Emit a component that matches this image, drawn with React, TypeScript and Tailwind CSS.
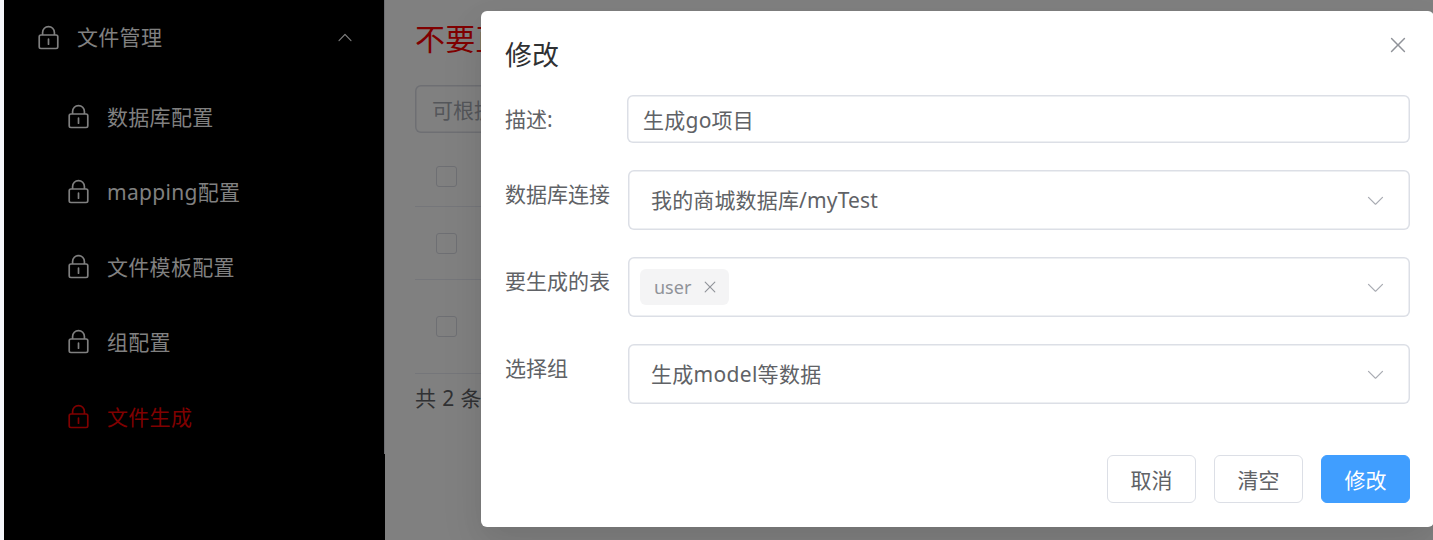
import type { ReactNode } from 'react';

const PATHS = {
  lock: 'M224 448a32 32 0 0 0-32 32v384a32 32 0 0 0 32 32h576a32 32 0 0 0 32-32V480a32 32 0 0 0-32-32H224zm0-64h576a96 96 0 0 1 96 96v384a96 96 0 0 1-96 96H224a96 96 0 0 1-96-96V480a96 96 0 0 1 96-96z M512 544a32 32 0 0 1 32 32v192a32 32 0 1 1-64 0V576a32 32 0 0 1 32-32zm192-160v-64a192 192 0 1 0-384 0v64h384zM512 64a256 256 0 0 1 256 256v128H256V320A256 256 0 0 1 512 64z',
  up: 'm488.832 344.32-339.84 356.672a32 32 0 0 0 0 44.16l.384.384a29.44 29.44 0 0 0 42.688 0l320-335.872 319.872 335.872a29.44 29.44 0 0 0 42.688 0l.384-.384a32 32 0 0 0 0-44.16L535.168 344.32a32 32 0 0 0-46.336 0z',
  down: 'M831.872 340.864 512 652.672 192.128 340.864a30.592 30.592 0 0 0-42.752 0 29.12 29.12 0 0 0 0 41.6L489.664 714.24a32 32 0 0 0 44.672 0l340.288-331.712a29.12 29.12 0 0 0 0-41.728 30.592 30.592 0 0 0-42.752 0z',
  close: 'M764.288 214.592 512 466.88 259.712 214.592a31.936 31.936 0 0 0-45.12 45.12L466.752 512 214.528 764.224a31.936 31.936 0 1 0 45.12 45.184L512 557.184l252.288 252.288a31.936 31.936 0 0 0 45.12-45.12L557.12 512.064l252.288-252.352a31.936 31.936 0 1 0-45.12-45.184z',
};

function Icon({ name, className }: { name: keyof typeof PATHS; className: string }) {
  return (
    <svg viewBox="0 0 1024 1024" fill="currentColor" className={`shrink-0 ${className}`}>
      <path d={PATHS[name]} />
    </svg>
  );
}

const menu = ['数据库配置', 'mapping配置', '文件模板配置', '组配置', '文件生成'];

function Sidebar() {
  return (
    <aside className="relative flex w-[381px] shrink-0 flex-col bg-black text-[#808080]">
      <div className="flex h-[74px] items-center pr-[31px] pl-[31px]">
        <Icon name="lock" className="size-[27px]" />
        <span className="ml-[15px] flex-1 tracking-[0.3px]">文件管理</span>
        <Icon name="up" className="size-[18px]" />
      </div>
      <ul className="mt-[5px]">
        {menu.map((label) => (
          <li
            key={label}
            className={`flex h-[75px] items-center pl-[61px] ${label === '文件生成' ? 'text-[#800000]' : ''}`}
          >
            <Icon name="lock" className="size-[27px]" />
            <span className="ml-[15px] tracking-[0.3px]">{label}</span>
          </li>
        ))}
      </ul>
      <span className="absolute top-0 right-0 h-[454px] w-px bg-[#6e6f73]" />
    </aside>
  );
}

function CheckRow({ className }: { className: string }) {
  return (
    <div className={`flex items-center border-b border-[#75767a] pl-[21px] ${className}`}>
      <span className="size-[21px] rounded-[3px] border border-[#6e6f73]" />
    </div>
  );
}

function Field({ label, className, children }: { label: string; className: string; children: ReactNode }) {
  return (
    <div className={`flex ${className}`}>
      <label className="h-12 w-[122px] shrink-0 leading-[48px] whitespace-nowrap">{label}</label>
      {children}
    </div>
  );
}

function Select({ children, className }: { children: ReactNode; className: string }) {
  return (
    <div
      className={`ml-px flex h-[60px] flex-1 items-center justify-between rounded-[6px] pr-6 shadow-[inset_0_0_0_1.5px_#dcdfe6] ${className}`}
    >
      {children}
      <Icon name="down" className="size-[21px] text-[#a8abb2]" />
    </div>
  );
}

function Button({ children, className }: { children: ReactNode; className: string }) {
  return (
    <button className={`h-12 w-[89px] rounded-[6px] border pt-0.5 text-center ${className}`}>{children}</button>
  );
}

function Dialog() {
  return (
    <div className="absolute top-[11px] left-[481px] flex h-[516px] w-[953px] flex-col rounded-[6px] bg-white pr-[24px] pl-[24px] text-[#606266] shadow-[0_18px_48px_6px_rgba(0,0,0,0.04),0_12px_30px_rgba(0,0,0,0.08)]">
      <header className="flex h-[84px] items-start justify-between">
        <h2 className="pt-[26px] text-[27px] leading-[36px] text-[#303133]">修改</h2>
        <Icon name="close" className="mt-[22px] size-6 text-[#909399]" />
      </header>
      <Field label="描述:" className="h-[75px]">
        <div className="flex h-12 flex-1 items-center rounded-[6px] pt-0.5 pl-4 tracking-[0.25px] shadow-[inset_0_0_0_1.5px_#dcdfe6]">
          生成go项目
        </div>
      </Field>
      <Field label="数据库连接" className="h-[87px]">
        <Select className="pl-[23px]">
          <span className="tracking-[0.15px]">我的商城数据库/myTest</span>
        </Select>
      </Field>
      <Field label="要生成的表" className="h-[87px]">
        <Select className="pl-3">
          <span className="flex h-9 w-[89px] items-center rounded-[6px] bg-[#f4f4f5] pl-[14px] text-[18px] text-[#909399]">
            user
            <Icon name="close" className="ml-[10px] size-[18px]" />
          </span>
        </Select>
      </Field>
      <Field label="选择组" className="h-[111px]">
        <Select className="pl-[23px]">
          <span className="tracking-[0.3px]">生成model等数据</span>
        </Select>
      </Field>
      <footer className="flex justify-end gap-[18px]">
        <Button className="border-[#dcdfe6]">取消</Button>
        <Button className="border-[#dcdfe6]">清空</Button>
        <Button className="border-[#409eff] bg-[#409eff] text-white">修改</Button>
      </footer>
    </div>
  );
}

export default function App() {
  return (
    <div className="relative flex h-[540px] w-[1433px] overflow-hidden bg-[#f5f6fb] pl-1 font-['Noto_Sans','Noto_Sans_CJK_SC',sans-serif] text-[21px] leading-[30px] font-normal">
      <Sidebar />
      <main className="flex-1 bg-[#808080] pl-[30px] whitespace-nowrap">
        <h1 className="pt-[18px] text-[30px] leading-[42px] tracking-[0.3px] text-[#800000]">不要直</h1>
        <div className="mt-[25px] flex h-12 w-[300px] items-center rounded-[6px] pt-0.5 pl-[17px] text-[#54565a] shadow-[inset_0_0_0_1.5px_#6e6f73]">
          可根据
        </div>
        <CheckRow className="mt-[14px] h-[60px]" />
        <CheckRow className="h-[73px]" />
        <CheckRow className="h-[94px]" />
        <p className="mt-[9px] tracking-[0.4px] text-[#303133]">共 2 条</p>
      </main>
      <Dialog />
    </div>
  );
}
